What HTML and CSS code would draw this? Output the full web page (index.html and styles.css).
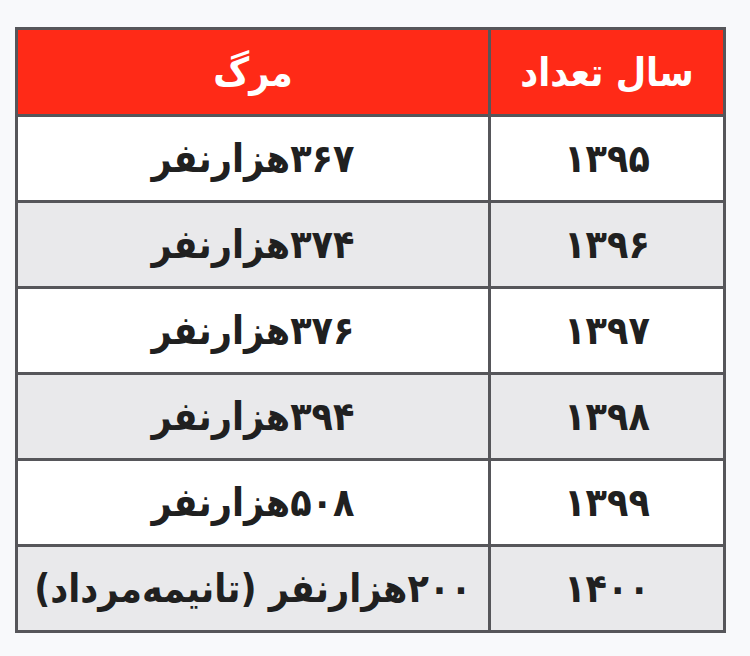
FILE: index.html
```html
<!DOCTYPE html>
<html lang="fa" dir="rtl">
<head>
<meta charset="utf-8">
<link rel="stylesheet" href="styles.css">
</head>
<body>
<table class="stats">
  <colgroup>
    <col class="col-year">
    <col class="col-death">
  </colgroup>
  <thead>
    <tr class="head">
      <th>سال تعداد</th>
      <th>مرگ</th>
    </tr>
  </thead>
  <tbody>
    <tr><td>۱۳۹۵</td><td>۳۶۷هزارنفر</td></tr>
    <tr class="alt"><td>۱۳۹۶</td><td>۳۷۴هزارنفر</td></tr>
    <tr><td>۱۳۹۷</td><td>۳۷۶هزارنفر</td></tr>
    <tr class="alt"><td>۱۳۹۸</td><td>۳۹۴هزارنفر</td></tr>
    <tr><td>۱۳۹۹</td><td>۵۰۸هزارنفر</td></tr>
    <tr class="alt"><td>۱۴۰۰</td><td>۲۰۰هزارنفر (تانیمه‌مرداد)</td></tr>
  </tbody>
</table>
</body>
</html>
```
FILE: styles.css
```css
html, body {
  margin: 0;
  padding: 0;
}
body {
  background: #f8f9fb;
  font-family: "DejaVu Sans Condensed", "DejaVu Sans", sans-serif;
  width: 750px;
  height: 656px;
  overflow: hidden;
}
.stats {
  border-collapse: collapse;
  margin: 27px 24px 0 0;
  width: 711px;
  table-layout: fixed;
  border: 3px solid #4d4d50;
}
.col-year { width: 235px; }
.stats th, .stats td {
  border: 3px solid #56565a;
  text-align: center;
  vertical-align: middle;
  padding: 0;
  color: #202020;
  font-weight: bold;
  font-size: 39px;
  line-height: 1;
  height: 83px;
}
.stats th {
  background: #ff2a17;
  color: #ffffff;
  height: 84px;
}
.stats td { background: #ffffff; }
.stats tr.alt td { background: #e9e9eb; }
```
